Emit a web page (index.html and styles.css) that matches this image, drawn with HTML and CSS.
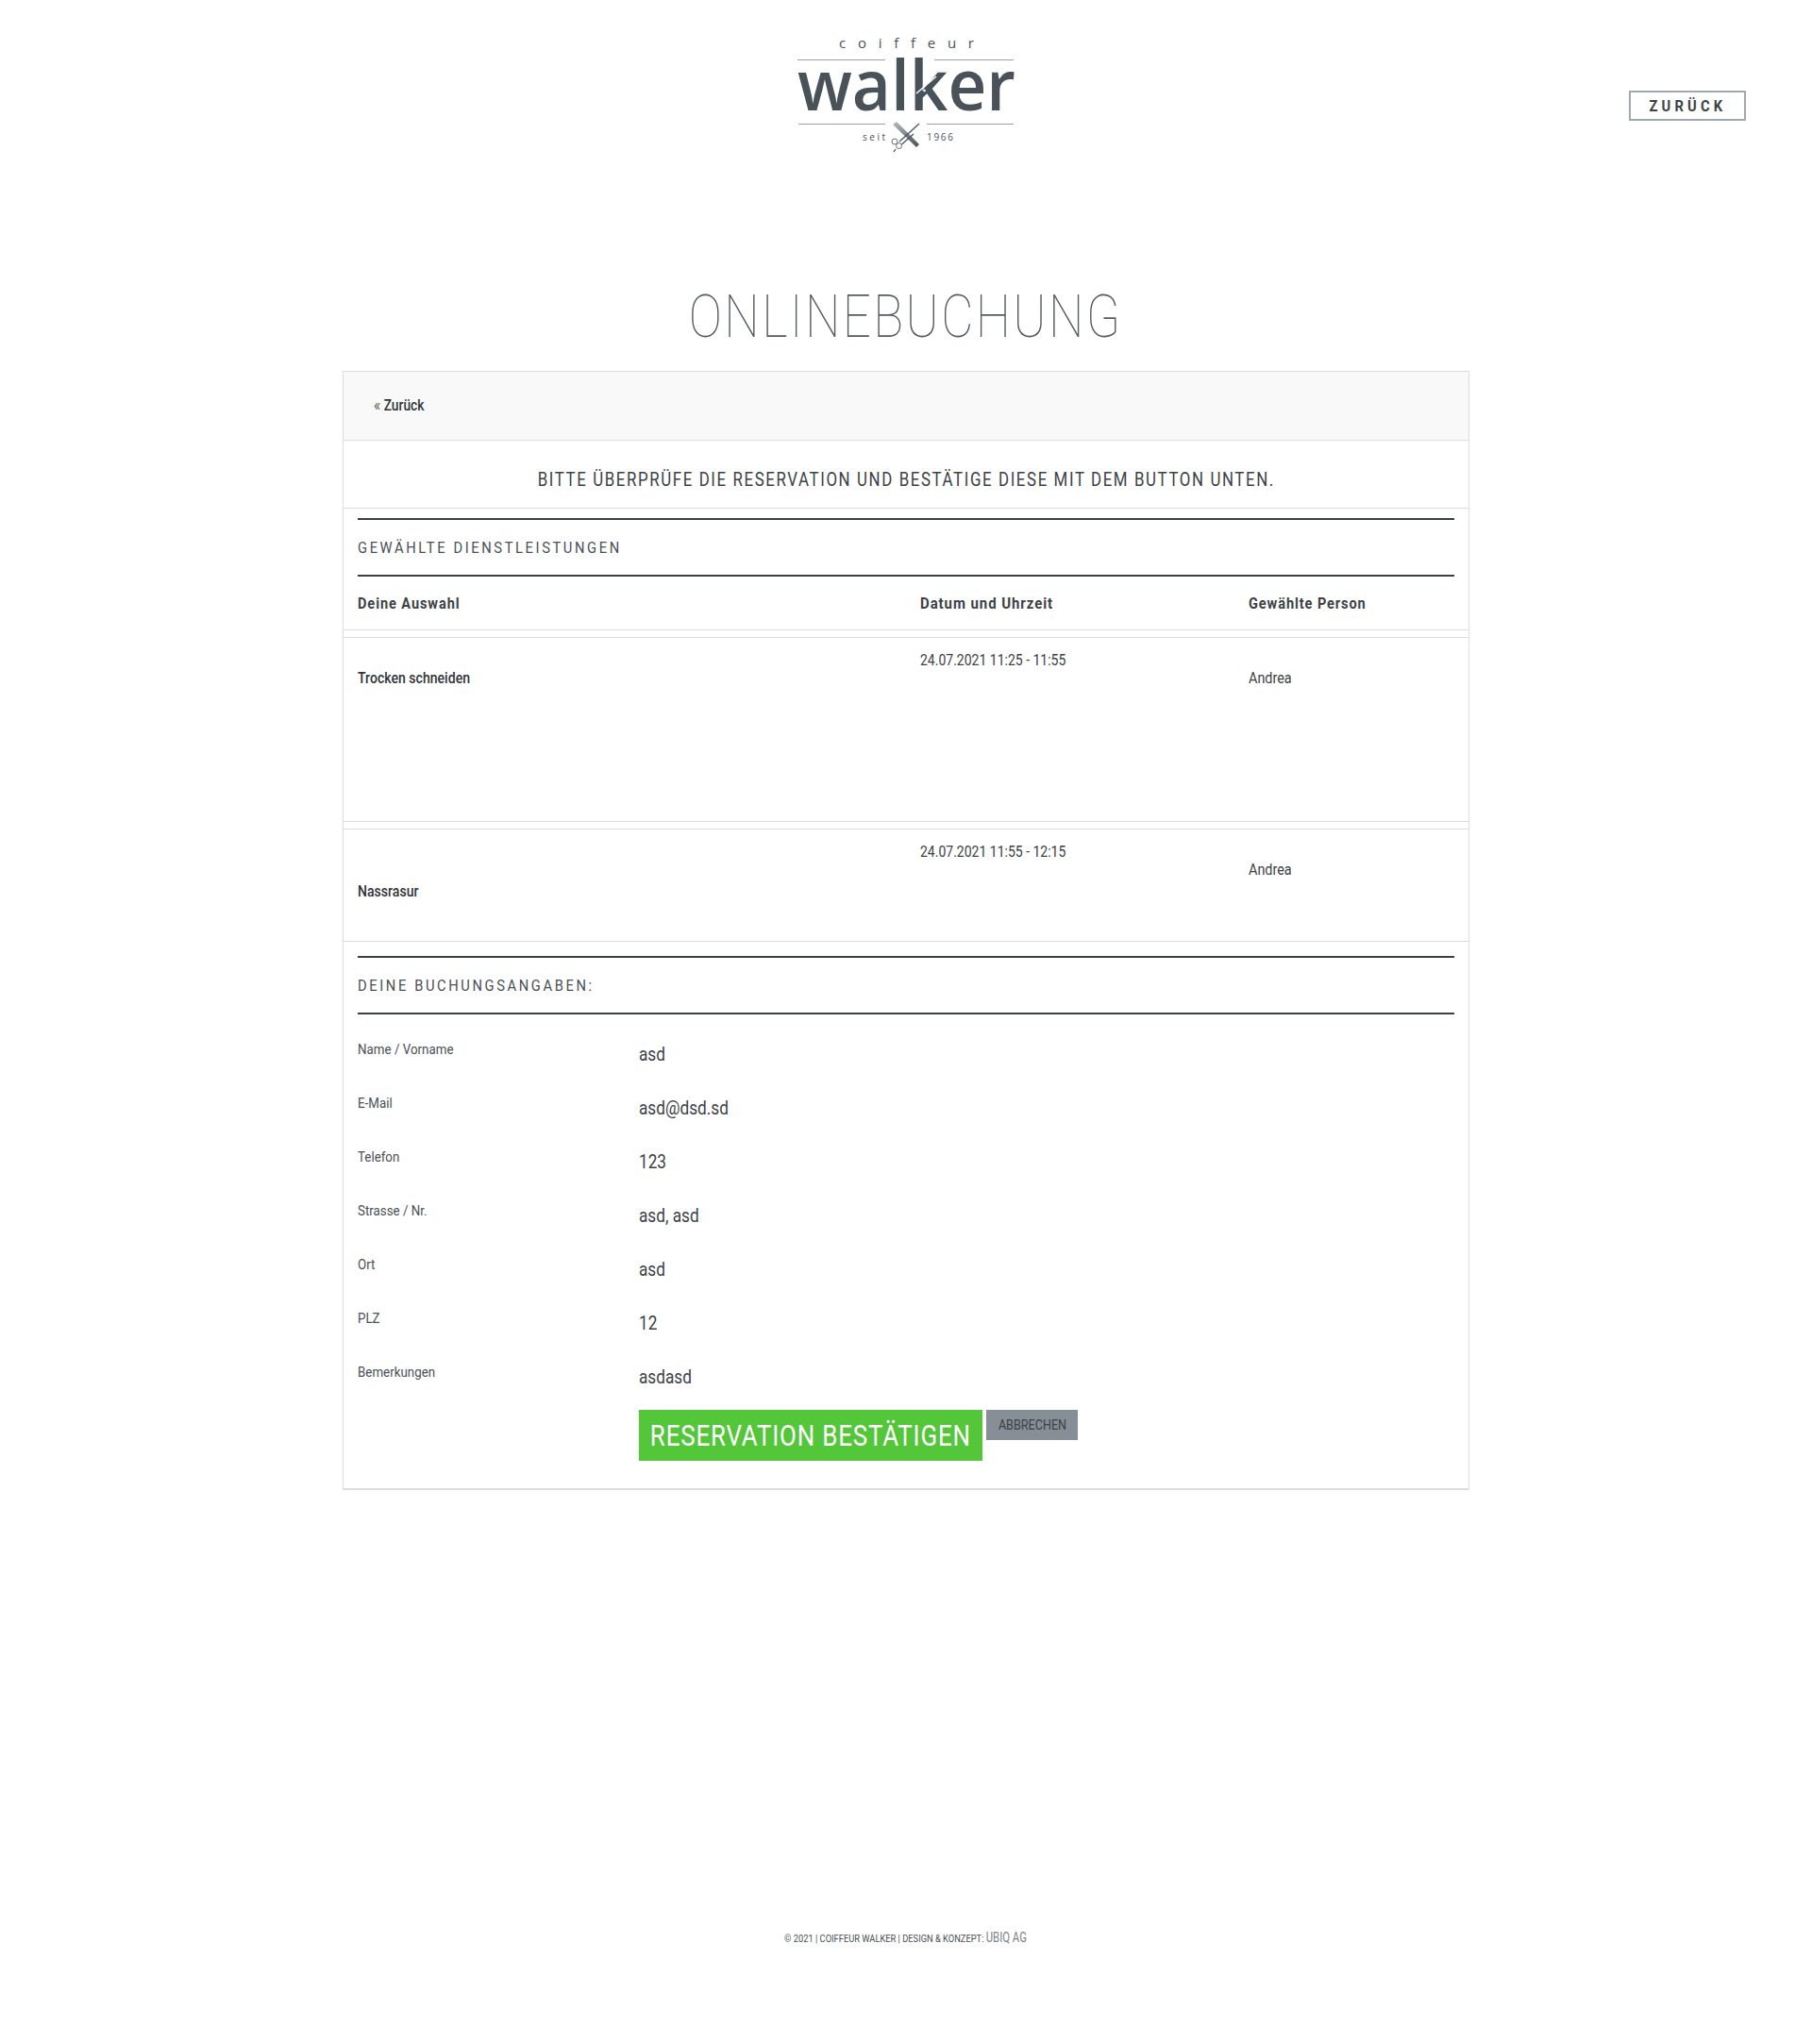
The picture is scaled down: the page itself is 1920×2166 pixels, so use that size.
FILE: index.html
```html
<!DOCTYPE html>
<html lang="de">
<head>
<meta charset="utf-8">
<title>Onlinebuchung – Coiffeur Walker</title>
<link rel="stylesheet" href="styles.css">
</head>
<body>
<header class="site-header">
  <div></div>
  <svg class="logo" width="240" height="140" viewBox="840 30 240 140" role="img" aria-label="coiffeur walker seit 1966">
    <defs>
      <linearGradient id="comb" x1="0" y1="0" x2="1" y2="1">
        <stop offset="0" stop-color="#b9bdc1"/>
        <stop offset="1" stop-color="#454d54"/>
      </linearGradient>
    </defs>
    <text class="logo-small" x="889" y="51" textLength="143" lengthAdjust="spacing">coiffeur</text>
    <path class="logo-rule" d="M845 63.5H938M990 63.5H1074M846 131.5H938M982 131.5H1074"/>
    <text class="logo-word" x="845" y="117" textLength="231" lengthAdjust="spacingAndGlyphs">walker</text>
    <path class="logo-cut" d="M971 99 L992 81"/>
    <circle class="logo-cut-dot" cx="979.5" cy="96" r="1.3"/>
    <text class="logo-tiny" x="914" y="149" textLength="24" lengthAdjust="spacing">seit</text>
    <text class="logo-tiny" x="982" y="149" textLength="28" lengthAdjust="spacing">1966</text>
    <path d="M946 132 L950 129 L974 153 L971 156 Z" fill="url(#comb)"/>
    <path class="logo-blade" d="M974 131 L953 150 M968 142 L952 156 M949 158 L947 161"/>
    <circle class="logo-ring" cx="948" cy="150" r="3"/>
    <circle class="logo-ring" cx="952.5" cy="154.5" r="3"/>
  </svg>
  <div class="header-action"><a class="btn-back" href="#"><span class="back-label">ZURÜCK</span></a></div>
</header>

<div class="page-title-wrap"><h1 class="page-title">ONLINEBUCHUNG</h1></div>

<main class="panel">
  <div class="panel-top"><a href="#" class="back-link"><span class="quote">«</span> Zurück</a></div>
  <div class="intro"><p class="intro-text">BITTE ÜBERPRÜFE DIE RESERVATION UND BESTÄTIGE DIESE MIT DEM BUTTON UNTEN.</p></div>

  <section class="services">
    <h2 class="section-title"><span class="section-label">GEWÄHLTE DIENSTLEISTUNGEN</span></h2>
    <div class="cols cols-head">
      <div>Deine Auswahl</div>
      <div>Datum und Uhrzeit</div>
      <div>Gewählte Person</div>
    </div>
  </section>

  <div class="cols service service-tall">
    <div class="service-name">Trocken schneiden</div>
    <div class="service-date">24.07.2021 11:25 - 11:55</div>
    <div class="service-person">Andrea</div>
  </div>
  <div class="cols service service-short">
    <div class="service-name service-name-low">Nassrasur</div>
    <div class="service-date">24.07.2021 11:55 - 12:15</div>
    <div class="service-person">Andrea</div>
  </div>

  <section class="booking">
    <h2 class="section-title"><span class="section-label">DEINE BUCHUNGSANGABEN:</span></h2>
    <dl class="details">
      <div class="detail"><dt>Name / Vorname</dt><dd>asd</dd></div>
      <div class="detail"><dt>E-Mail</dt><dd>asd@dsd.sd</dd></div>
      <div class="detail"><dt>Telefon</dt><dd>123</dd></div>
      <div class="detail"><dt>Strasse / Nr.</dt><dd>asd, asd</dd></div>
      <div class="detail"><dt>Ort</dt><dd>asd</dd></div>
      <div class="detail"><dt>PLZ</dt><dd>12</dd></div>
      <div class="detail"><dt>Bemerkungen</dt><dd>asdasd</dd></div>
    </dl>
    <div class="actions">
      <button class="btn-confirm" type="button"><span class="confirm-label">RESERVATION BESTÄTIGEN</span></button>
      <button class="btn-cancel" type="button"><span class="cancel-label">ABBRECHEN</span></button>
    </div>
  </section>
</main>

<footer class="site-footer"><span class="footer-text">© 2021 | COIFFEUR WALKER | DESIGN &amp; KONZEPT: <a href="#">UBIQ AG</a></span></footer>
</body>
</html>
```

FILE: styles.css
```css
* { box-sizing: border-box; }
html, body { margin: 0; padding: 0; }
body {
  height: 2166px;
  background: #fff;
  color: #3c4246;
  font-family: Roboto, sans-serif;
  font-size: 15px;
  display: flex;
  flex-direction: column;
}
a { color: inherit; text-decoration: none; }

.site-header {
  display: grid;
  grid-template-columns: 1fr 240px 1fr;
  height: 312px;
  padding-top: 30px;
}
.logo { display: block; overflow: visible; }
.logo text { font-variant-ligatures: none; }
.logo-small { font: 400 15px "Open Sans", sans-serif; fill: #4a5259; }
.logo-tiny { font: 400 10px "Open Sans", sans-serif; fill: #4a5259; }
.logo-word { font: 600 75px "Open Sans", sans-serif; fill: #4a5259; }
.logo-rule { stroke: #9ba0a5; stroke-width: 1; fill: none; }
.logo-cut { stroke: #fff; stroke-width: 1.5; }
.logo-cut-dot { fill: #fff; }
.logo-blade { stroke: #4a5259; stroke-width: 1.3; fill: none; }
.logo-ring { stroke: #666d73; stroke-width: 1; fill: #fff; }

.header-action { display: flex; justify-content: flex-end; padding: 66px 70px 0 0; align-items: flex-start; }
.btn-back {
  display: block;
  width: 124px;
  height: 32px;
  border: 2px solid #a0a8b0;
  text-align: center;
  font-weight: 700;
  font-size: 16px;
  line-height: 29px;
  letter-spacing: 4.5px;
  color: #3c4246;
}
.back-label { display: inline-block; transform: scaleX(0.92); }

.page-title-wrap {
  height: 45px;
  margin-bottom: 36px;
  display: flex;
  justify-content: center;
}
.page-title {
  margin: 0;
  font-weight: 100;
  font-size: 63px;
  line-height: 47px;
  letter-spacing: 2.8px;
  white-space: nowrap;
  color: #555b60;
  transform: scaleX(0.84);
}

.panel {
  width: 1194px;
  height: 1186px;
  margin: 0 auto;
  border: 1px solid #ddd;
  border-bottom-width: 2px;
}
.panel-top {
  height: 73px;
  padding: 0 32px 1px;
  background: #f9f9f9;
  border-bottom: 1px solid #ddd;
  display: flex;
  align-items: center;
}
.back-link {
  font-size: 16px;
  line-height: 20px;
  font-weight: 500;
  color: #2f3438;
  transform: scaleX(0.86);
  transform-origin: left center;
}
.quote { color: #666; font-weight: 400; font-size: 18px; line-height: 1; }
.intro {
  height: 72px;
  border-bottom: 1px solid #ddd;
  display: flex;
  justify-content: center;
}
.intro-text {
  margin: 0;
  font-size: 20px;
  line-height: 82px;
  letter-spacing: 1.9px;
  white-space: nowrap;
  color: #3c4246;
  transform: scaleX(0.843);
}

.services { padding: 10px 15px 0; border-bottom: 1px solid #ddd; }
.section-title {
  margin: 0;
  height: 62px;
  border-top: 2px solid #3a4145;
  border-bottom: 2px solid #3a4145;
  font-size: 17px;
  font-weight: 400;
  line-height: 58px;
  letter-spacing: 3px;
  color: #4a5055;
}
.section-label { display: inline-block; transform: scaleX(0.866); transform-origin: left center; }
.cols {
  display: grid;
  grid-template-columns: 596px 348px 1fr;
}
.cols-head {
  height: 56px;
  align-items: center;
  font-weight: 700;
  font-size: 16px;
  letter-spacing: 1px;
}
.cols-head > div { transform: scaleX(0.91); transform-origin: left center; }
.cols-head > div:nth-child(2) { transform: scaleX(0.936); }
.service {
  margin-top: 7px;
  padding: 0 15px;
  border-top: 1px solid #ddd;
  border-bottom: 1px solid #ddd;
}
.service-tall { height: 196px; }
.service-short { height: 120px; }
.service-name {
  font-size: 16px;
  font-weight: 500;
  color: #2f3438;
  padding-top: 32px;
  line-height: 22px;
  transform: scaleX(0.88);
  transform-origin: left center;
}
.service-name-low { padding-top: 55px; }
.service-date {
  font-size: 16px;
  padding-top: 13px;
  line-height: 22px;
  transform: scaleX(0.875);
  transform-origin: left center;
}
.service-person {
  font-size: 16px;
  padding-top: 32px;
  line-height: 22px;
  transform: scaleX(0.9);
  transform-origin: left center;
}

.booking { padding: 15px 15px 0; }
.details { margin: 0; padding-top: 25px; }
.detail {
  display: grid;
  grid-template-columns: 298px 1fr;
  height: 57px;
}
.detail dt {
  font-size: 15px;
  line-height: 20px;
  padding-top: 2px;
  color: #4a5055;
  transform: scaleX(0.89);
  transform-origin: left center;
}
.detail dd {
  margin: 0;
  font-size: 21px;
  line-height: 28px;
  padding-top: 3px;
  color: #3c4246;
  transform: scaleX(0.82);
  transform-origin: left center;
}
.actions { display: flex; align-items: flex-start; gap: 4px; padding-left: 298px; margin-top: -5px; }
.btn-confirm, .btn-cancel {
  display: flex;
  align-items: center;
  justify-content: center;
  border: 0;
  font: inherit;
  white-space: nowrap;
  padding: 0;
}
.btn-confirm {
  width: 364px;
  height: 54px;
  background: #53c639;
  color: #fff;
  font-size: 32px;
}
.confirm-label { display: block; letter-spacing: 1px; transform: scaleX(0.81); }
.btn-cancel {
  width: 97px;
  height: 32px;
  background: #868e96;
  color: #3c4246;
  font-size: 15px;
}
.cancel-label { display: block; transform: scaleX(0.84); }

.site-footer {
  margin-top: 466px;
  display: flex;
  justify-content: center;
  font-size: 11.5px;
  line-height: 16px;
  color: #4a5055;
}
.footer-text { display: block; white-space: nowrap; transform: scaleX(0.81); }
.site-footer a { font-size: 14px; color: #7a8288; }
```
